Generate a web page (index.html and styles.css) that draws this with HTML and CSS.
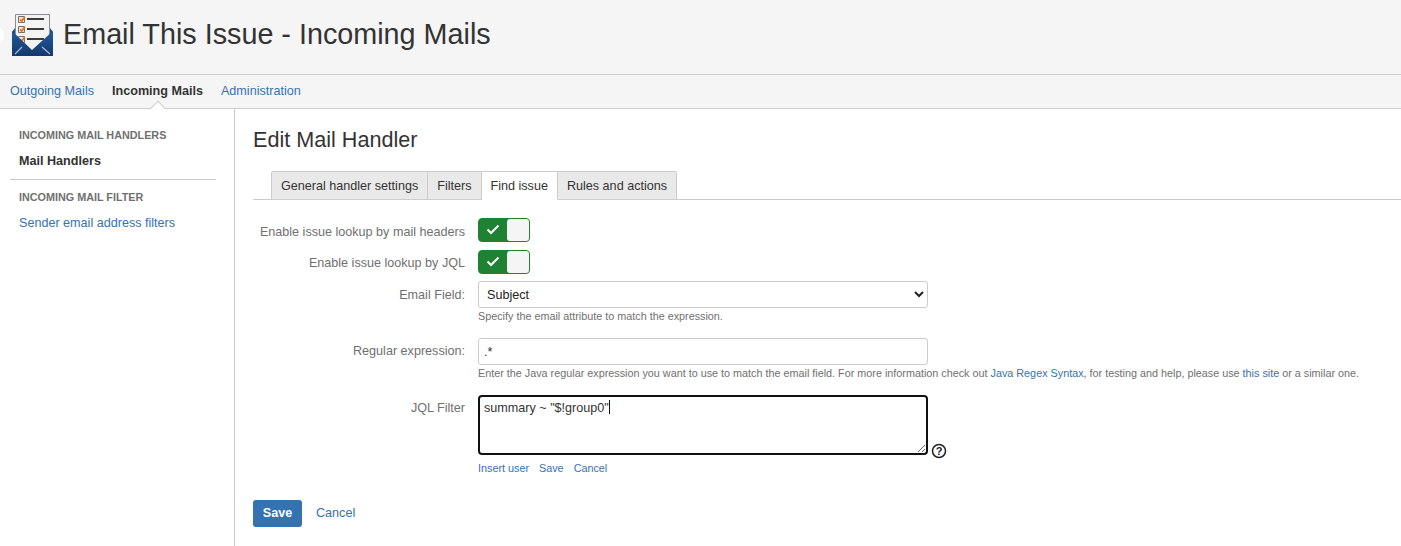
FILE: index.html
```html
<!DOCTYPE html>
<html lang="en">
<head>
<meta charset="utf-8">
<title>Email This Issue - Incoming Mails</title>
<link rel="stylesheet" href="styles.css">
</head>
<body>
<header class="page-header">
  <span class="edge-knob"></span>
  <svg class="logo" width="41" height="43" viewBox="0 0 41 43" aria-hidden="true">
    <defs>
      <linearGradient id="env" x1="0" y1="0" x2="0" y2="1"><stop offset="0" stop-color="#1f5c9f"/><stop offset="1" stop-color="#17386a"/></linearGradient>
    </defs>
    <path d="M0 19 L3 15 L38 15 L41 19 L41 30 L0 30 Z" fill="#1b4f8e"/>
    <path d="M3.500 1.500 H37.500 V26 L20 39 L3.500 26 Z" fill="#f3f3f1" stroke="#8a8e92"/>
    <path d="M6.500 3.500h6v6h-6zM6.500 13.500h6v6h-6zM6.500 23.500h6v6h-6z" fill="#efe3d6" stroke="#7b7067"/>
    <path d="M8 6.500l1.700 1.700 3-4.200M8 16.500l1.700 1.700 3-4.200M8 26.500l1.700 1.700 3-4.200" fill="none" stroke="#e5721a" stroke-width="1.700"/>
    <path d="M15 6h17M15 16h17M15 26h17" stroke="#3a3d40" stroke-width="2"/>
    <path d="M0 18 L20 37 L41 18 V43 H0 Z" fill="url(#env)"/>
    <path d="M3 41 L10 34 M38 41 L30 34" stroke="#a4bbd6" stroke-width="1.200"/>
  </svg>
  <h1 class="page-title">Email This Issue - Incoming Mails</h1>
</header>
<nav class="top-nav">
  <a href="#">Outgoing Mails</a>
  <a href="#" class="active">Incoming Mails</a>
  <a href="#">Administration</a>
</nav>
<div class="content">
  <aside class="sidebar">
    <h2 class="side-heading">Incoming Mail Handlers</h2>
    <a href="#" class="side-link current">Mail Handlers</a>
    <hr class="side-rule">
    <h2 class="side-heading">Incoming Mail Filter</h2>
    <a href="#" class="side-link">Sender email address filters</a>
  </aside>
  <main class="main">
    <h2 class="main-title">Edit Mail Handler</h2>
    <div class="tabs">
      <a href="#" class="tab">General handler settings</a>
      <a href="#" class="tab">Filters</a>
      <a href="#" class="tab selected">Find issue</a>
      <a href="#" class="tab">Rules and actions</a>
    </div>
    <form class="form">
      <div class="row row-toggle">
        <label class="label">Enable issue lookup by mail headers</label>
        <span class="toggle"><svg width="14" height="11" viewBox="0 0 14 11"><path d="M1.500 5.500L5 9L12.500 1.500" fill="none" stroke="#fff" stroke-width="2"/></svg><span class="knob"></span></span>
      </div>
      <div class="row row-toggle second">
        <label class="label">Enable issue lookup by JQL</label>
        <span class="toggle"><svg width="14" height="11" viewBox="0 0 14 11"><path d="M1.500 5.500L5 9L12.500 1.500" fill="none" stroke="#fff" stroke-width="2"/></svg><span class="knob"></span></span>
      </div>
      <div class="row row-email">
        <label class="label">Email Field:</label>
        <div class="control">
          <select class="field select"><option>Subject</option></select>
          <div class="hint">Specify the email attribute to match the expression.</div>
        </div>
      </div>
      <div class="row row-regex">
        <label class="label">Regular expression:</label>
        <div class="control">
          <input class="field input" type="text" value=".*">
          <div class="hint">Enter the Java regular expression you want to use to match the email field. For more information check out <a href="#">Java Regex Syntax</a>, for testing and help, please use <a href="#">this site</a> or a similar one.</div>
        </div>
      </div>
      <div class="row row-jql">
        <label class="label">JQL Filter</label>
        <div class="control">
          <div class="jql-line">
            <div class="textarea-wrap">
              <textarea class="textarea">summary ~ "$!group0"</textarea>
              <span class="caret"></span>
            </div>
            <svg class="help" width="16" height="16" viewBox="0 0 16 16"><circle cx="8" cy="8" r="6.500" fill="none" stroke="#222" stroke-width="1.500"/><text x="8" y="12" text-anchor="middle" class="help-mark">?</text></svg>
          </div>
          <div class="jql-actions"><a href="#">Insert user</a><a href="#">Save</a><a href="#">Cancel</a></div>
        </div>
      </div>
      <div class="buttons">
        <button type="button" class="save">Save</button>
        <a href="#" class="cancel">Cancel</a>
      </div>
    </form>
  </main>
</div>
</body>
</html>
```
FILE: styles.css
```css
* { box-sizing: border-box; }
html, body { margin: 0; padding: 0; height: 100%; overflow: hidden; }
body { font-family: "Liberation Sans", Arial, sans-serif; font-size: 12.6px; color: #333; background: #fff; }
a { color: #3572b0; text-decoration: none; }

.page-header { position: relative; height: 75px; background: #f5f5f5; border-bottom: 1px solid #ccc; display: flex; align-items: flex-start; padding: 13px 0 0 12px; }
.edge-knob { position: absolute; left: -10px; top: 27px; width: 14px; height: 17px; border-radius: 50%; background: #fff; }
.logo { flex: none; display: block; }
.page-title { margin: 2px 0 0 10px; font-size: 28.75px; line-height: 38px; font-weight: 400; color: #333; white-space: nowrap; }

.top-nav { position: relative; height: 34px; padding-bottom: 2px; background: #f5f5f5; border-bottom: 1px solid #ccc; display: flex; gap: 18px; padding-left: 10px; align-items: center; font-size: 12.6px; }
.top-nav a.active { font-weight: 700; color: #333; position: relative; }
.top-nav a.active::after { content: ""; position: absolute; left: 50%; bottom: -17px; width: 11px; height: 11px; margin-left: -5px; background: #fff; border: 1px solid #ccc; border-right: 0; border-bottom: 0; transform: rotate(45deg); }

.content { display: flex; height: 437px; }
.sidebar { width: 235px; flex: none; border-right: 1px solid #ccc; padding: 20px 18px 0 10px; }
.side-heading { margin: 0 0 0 9px; font-size: 10.8px; line-height: 13px; font-weight: 700; text-transform: uppercase; color: #707070; }
.side-link { display: block; margin: 12px 0 0 9px; font-size: 12.6px; line-height: 15px; }
.side-link.current { font-weight: 700; color: #333; }
.side-rule { border: 0; border-top: 1px solid #ccc; margin: 10px 0 11px; }

.main { flex: 1; min-width: 0; padding: 18px 0 0 18px; }
.main-title { margin: 0; font-size: 21.6px; line-height: 25px; font-weight: 400; color: #333; }
.tabs { display: flex; margin-top: 19px; padding-left: 18px; height: 29px; border-bottom: 1px solid #ccc; }
.tab { height: 29px; padding: 0 9px; line-height: 28px; font-size: 12.6px; color: #333; background: #e9e9e9; border: 1px solid #ccc; border-left: 0; border-bottom: 1px solid #ccc; }
.tab:first-child { border-left: 1px solid #ccc; border-radius: 2px 0 0 0; }
.tab:last-child { border-radius: 0 2px 0 0; }
.tab.selected { background: #fff; border-bottom-color: #fff; }

.form { display: block; }
.row { display: flex; align-items: flex-start; }
.label { width: 212px; flex: none; text-align: right; color: #707070; font-size: 12.6px; line-height: 16px; margin-right: 13px; }
.row-toggle { margin-top: 17px; height: 25px; align-items: center; }
.row-toggle .label { padding-top: 5px; height: 21px; }
.row-toggle.second { margin-top: 7px; }
.row-toggle.second .label { padding-top: 3px; height: 19px; }
.toggle { display: flex; align-items: center; width: 52px; height: 24px; background: #1f8232; border: 1px solid #1f8232; border-radius: 4px; padding-left: 7px; justify-content: space-between; }
.knob { width: 22px; height: 22px; background: #f5f5f5; border-radius: 3px; }

.row-email { margin-top: 7px; }
.row-email .label { padding-top: 6px; }
.row-regex { margin-top: 15px; }
.row-regex .label { padding-top: 5px; }
.row-jql { margin-top: 15px; }
.row-jql .label { padding-top: 5px; }

.field { display: block; width: 450px; height: 27px; font-family: inherit; font-size: 12.6px; color: #333; background: #fff; border: 1px solid #ccc; border-radius: 3px; padding: 0 4px; }
.input { padding: 0 5px; }
.select { color: #222; }
.hint { font-size: 10.8px; line-height: 14px; margin-top: 1px; color: #707070; white-space: nowrap; }

.jql-line { display: flex; align-items: flex-end; }
.textarea-wrap { position: relative; width: 450px; height: 60px; }
.textarea { display: block; width: 450px; height: 60px; margin: 0; font-family: inherit; font-size: 12.6px; line-height: 15px; color: #333; background: #fff; border: 2px solid #111; border-radius: 4px; padding: 4px 4px; outline: 0; resize: vertical; }
.caret { position: absolute; left: 131px; top: 5px; width: 1px; height: 14px; background: #111; }
.help { margin: 0 0 -4px 3px; flex: none; }
.help-mark { font-family: "Liberation Sans", Arial, sans-serif; font-size: 11px; font-weight: 700; fill: #222; }
.jql-actions { display: flex; gap: 10px; margin-top: 6px; font-size: 10.8px; line-height: 14px; }

.buttons { display: flex; align-items: center; gap: 14px; margin-top: 25px; }
.save { width: 49px; height: 27px; background: #3572b0; color: #fff; border: 0; border-radius: 3px; font-family: inherit; font-size: 12.6px; font-weight: 700; padding: 0 0 2px; }
.cancel { font-size: 12.6px; margin-top: -2px; }
```
